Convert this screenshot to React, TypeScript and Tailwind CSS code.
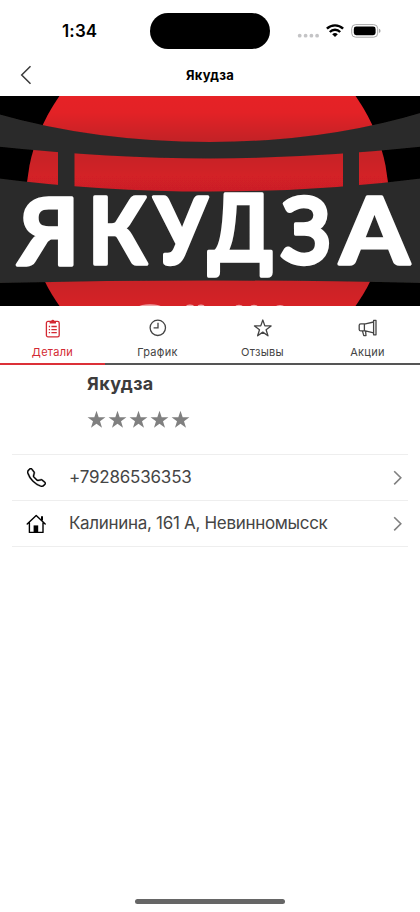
import React from "react";

const tabs = [
  { label: "Детали", icon: ClipboardIcon, active: true },
  { label: "График", icon: ClockIcon, active: false },
  { label: "Отзывы", icon: StarIcon, active: false },
  { label: "Акции", icon: MegaphoneIcon, active: false },
];

const contacts = [
  { label: "+79286536353", icon: PhoneIcon, tracking: "tracking-[-0.2px]" },
  { label: "Калинина, 161 А, Невинномысск", icon: HomeIcon, tracking: "tracking-[-0.31px]" },
];

// Each letter of the sign has its own slot so the lettering stays uneven
const signLetters = [
  { char: "Я", x: 18, y: 169, width: 61 },
  { char: "К", x: 88, y: 168, width: 59 },
  { char: "У", x: 154, y: 168, width: 53 },
  { char: "Д", x: 208, y: 165, width: 65 },
  { char: "З", x: 281, y: 168, width: 50 },
  { char: "А", x: 340, y: 168, width: 69 },
];

function ClipboardIcon() {
  return (
    <svg width="20" height="22" viewBox="0 0 20 22" fill="none" stroke="currentColor" strokeWidth="1.3">
      <rect x="3.4" y="3.4" width="12.8" height="15.4" rx="1.6" />
      <path d="M6.6 5.6V2.9h1.6a1.7 1.7 0 0 1 3.2 0h1.6v2.7Z" fill="currentColor" stroke="none" />
      <path d="M5.8 8.5h1.3M5.8 11.6h1.3M5.8 14.7h1.3M8.4 8.5h5.4M8.4 11.6h5.4M8.4 14.7h5.4" />
    </svg>
  );
}

function ClockIcon() {
  return (
    <svg width="20" height="22" viewBox="0 0 20 22" fill="none" stroke="currentColor" strokeWidth="1.3">
      <circle cx="9.8" cy="9.8" r="7.7" />
      <path d="M10 4.8v5.1H5.6" />
    </svg>
  );
}

function StarIcon() {
  return (
    <svg width="20" height="22" viewBox="0 0 20 22" fill="none" stroke="currentColor" strokeWidth="1.3" strokeLinejoin="round">
      <path d="m9.8 2 2.05 5.9h6.25l-5 3.8 1.85 6.1-5.15-3.7-5.15 3.7 1.85-6.1-5-3.8h6.25Z" />
    </svg>
  );
}

function MegaphoneIcon() {
  return (
    <svg width="20" height="22" viewBox="0 0 20 22" fill="none" stroke="currentColor" strokeWidth="1.3" strokeLinejoin="round">
      <path d="M15.6 2.4h2.4v14.4h-2.4Z" />
      <path d="M15.6 4 7.4 5.8H2.8c-.9 0-1.6.7-1.6 1.5v4.1c0 .8.7 1.5 1.6 1.5h4.6l8.2 2M6.4 5.8v7M4.4 12.9l1.4 4.7H8l-.4-4.5" />
    </svg>
  );
}

function PhoneIcon() {
  return (
    <svg className="mx-[1.5px]" width="19" height="19" viewBox="0 0 16 16" fill="currentColor">
      <path d="M3.654 1.328a.678.678 0 0 0-1.015-.063L1.605 2.3c-.483.484-.661 1.169-.45 1.77a17.6 17.6 0 0 0 4.168 6.608 17.6 17.6 0 0 0 6.608 4.168c.601.211 1.286.033 1.77-.45l1.034-1.034a.678.678 0 0 0-.063-1.015l-2.307-1.794a.68.68 0 0 0-.58-.122l-2.19.547a1.75 1.75 0 0 1-1.657-.459L5.482 8.062a1.75 1.75 0 0 1-.46-1.657l.548-2.19a.68.68 0 0 0-.122-.58zM1.884.511a1.745 1.745 0 0 1 2.612.163L6.29 2.98c.329.423.445.974.315 1.494l-.547 2.19a.68.68 0 0 0 .178.643l2.457 2.457a.68.68 0 0 0 .644.178l2.189-.547a1.75 1.75 0 0 1 1.494.315l2.306 1.794c.829.645.905 1.87.163 2.611l-1.034 1.034c-.74.74-1.846 1.065-2.877.702a18.6 18.6 0 0 1-7.01-4.42 18.6 18.6 0 0 1-4.42-7.009c-.362-1.03-.037-2.137.703-2.877z" stroke="currentColor" strokeWidth="0.25" />
    </svg>
  );
}

function HomeIcon() {
  return (
    <svg width="22" height="22" viewBox="0 0 22 22" fill="none" stroke="currentColor" strokeWidth="1.4" strokeLinejoin="round" strokeLinecap="round">
      <path d="M2.2 11 11.2 2.4l9 8.6M4.4 10v9.4h13.6V10" />
      <path d="M17 6.8V3.9" strokeWidth="2" />
      <path d="M8.6 19.4v-7h4.6v7Z" fill="currentColor" stroke="none" />
    </svg>
  );
}

function StatusBar() {
  return (
    <div className="flex h-[54px] items-start">
      <div className="w-[150px] pl-[62px] pt-[19px] text-[17px] font-semibold leading-6 tracking-[0.15px]">1:34</div>
      <div className="mt-[13px] h-[36px] w-[120px] rounded-full bg-black" />
      <svg className="ml-[27px] mt-[20px]" width="88" height="22" viewBox="0 0 88 22">
        <g fill="#c4c4c6">
          <circle cx="2.7" cy="15.7" r="1.9" />
          <circle cx="8.6" cy="15.7" r="1.9" />
          <circle cx="14.4" cy="15.7" r="1.9" />
          <circle cx="20.1" cy="15.7" r="1.9" />
        </g>
        <g fill="none" stroke="#000" strokeWidth="2.4">
          <path d="M29.9 8.7a11.6 11.6 0 0 1 16.2 0" />
          <path d="M32.8 12a7.3 7.3 0 0 1 10.4 0" />
        </g>
        <path d="M35.2 14.2a4.2 4.2 0 0 1 5.6 0L38 17.1Z" />
        <rect x="54.7" y="4.6" width="26" height="12.6" rx="4" fill="none" stroke="#a8a8a8" />
        <rect x="56.8" y="6.6" width="21.8" height="8.6" rx="2.4" />
        <path d="M82 8.8c2 .6 2 3.6 0 4.2Z" fill="#a8a8a8" />
      </svg>
    </div>
  );
}

function Banner() {
  return (
    <svg className="block h-[210px] w-full" viewBox="0 0 420 210">
      <defs>
        <linearGradient id="sun" x1="0" y1="0" x2="0" y2="210" gradientUnits="userSpaceOnUse">
          <stop offset="0" stopColor="#e62128" />
          <stop offset="0.08" stopColor="#e32028" />
          <stop offset="0.21" stopColor="#c42127" />
          <stop offset="0.3" stopColor="#c92127" />
          <stop offset="0.38" stopColor="#d32027" />
          <stop offset="0.45" stopColor="#cb1f26" />
          <stop offset="0.89" stopColor="#c92027" />
          <stop offset="1" stopColor="#d62028" />
        </linearGradient>
        <filter id="soft" x="-10%" y="-10%" width="120%" height="120%">
          <feGaussianBlur stdDeviation="0.7" />
        </filter>
      </defs>
      <rect width="420" height="210" fill="#000" />
      <g filter="url(#soft)">
        <circle cx="207.5" cy="105" r="181.5" fill="url(#sun)" />
        <g fill="#2c2b2a">
          <path d="M-4 17.5Q95 46 210 46T424 16V50.5Q310 62.5 210 62.5T-4 50.5Z" />
          <path d="M-4 82Q100 95.5 210 95.5T424 82V187Q310 184.5 210 184.5T-4 187Z" />
          <path d="M58 52h16.5v42H58ZM343 52h16v42h-16Z" />
        </g>
        {/* highlights cut off by the lower edge */}
        <g fill="#eea5a6">
          <ellipse cx="150" cy="210.5" rx="11" ry="2.2" />
          <ellipse cx="190" cy="210.5" rx="4" ry="2" />
          <ellipse cx="201" cy="210.5" rx="3.5" ry="2" />
          <ellipse cx="239" cy="210.5" rx="3.5" ry="1.8" />
          <ellipse cx="254" cy="210.5" rx="3.5" ry="1.8" />
          <ellipse cx="280" cy="210.5" rx="4" ry="1.6" />
        </g>
      </g>
      <g
        fontFamily="Lato, 'Noto Sans', sans-serif"
        fontWeight="700"
        fontSize="91"
        fill="#fff"
        stroke="#fff"
        strokeWidth="3.5"
        strokeLinejoin="round"
      >
        {signLetters.map((l) => (
          <text
            key={l.char}
            x={l.x}
            y={l.y}
            textLength={l.width}
            lengthAdjust="spacingAndGlyphs"
            filter="url(#soft)"
          >
            {l.char}
          </text>
        ))}
      </g>
    </svg>
  );
}

function TabBar() {
  return (
    <div className="grid h-[59px] grid-cols-4">
      {tabs.map(({ label, icon: Icon, active }) => (
        <button
          key={label}
          className={
            active
              ? "flex flex-col items-center border-b-2 border-[#dc3038] pt-[12px] text-[#d32832]"
              : "flex flex-col items-center border-b-2 border-[#555] pt-[12px] text-[#444]"
          }
        >
          <Icon />
          <span className="mt-[4px] text-[11px] leading-4 tracking-[0.3px]">{label}</span>
        </button>
      ))}
    </div>
  );
}

function Chevron() {
  return (
    <svg width="10" height="16" viewBox="0 0 10 16" fill="none" stroke="#808080" strokeWidth="1.6">
      <path d="m1.2 1.2 6.6 6.6-6.6 6.6" />
    </svg>
  );
}

export default function App() {
  return (
    <div className="flex h-[912px] w-[420px] flex-col overflow-hidden bg-white font-[Inter,'Noto_Sans',sans-serif] text-black">
      <StatusBar />
      <header className="grid h-[42px] grid-cols-3 items-center">
        <svg className="ml-[20px]" width="12" height="20" viewBox="0 0 12 20" fill="none" stroke="#3a3a3a" strokeWidth="1.5">
          <path d="M10.5 1.3 1.7 10l8.8 8.7" />
        </svg>
        <h1 className="pt-[2px] text-center text-[13px] font-bold tracking-[0.25px]">Якудза</h1>
      </header>
      <Banner />
      <TabBar />
      <section className="h-[89px] pl-[87px] pt-[7px]">
        <h2 className="text-[18px] font-bold leading-6 tracking-[0.4px] text-[#3c3c3c]">Якудза</h2>
        <div className="mt-[14px] flex gap-[2px]">
          {[1, 2, 3, 4, 5].map((n) => (
            <svg key={n} width="19" height="19" viewBox="0 0 20 20" fill="#808080">
              <path d="m10 .8 2.3 6.7h7.1l-5.7 4.3 2.1 7-5.8-4.2-5.8 4.2 2.1-7L.6 7.5h7.1Z" />
            </svg>
          ))}
        </div>
      </section>
      <ul className="mx-3 border-t border-[#eeeeee]">
        {contacts.map(({ label, icon: Icon, tracking }) => (
          <li key={label} className="flex h-[46px] items-center border-b border-[#eeeeee] pl-[13px] pr-[5px]">
            <Icon />
            <span className={`ml-[22px] flex-1 pt-px text-[17px] text-[#454545] ${tracking}`}>{label}</span>
            <Chevron />
          </li>
        ))}
      </ul>
      <div className="mx-auto mb-[8px] mt-auto h-[5px] w-[150px] rounded-full bg-[#666]" />
    </div>
  );
}
